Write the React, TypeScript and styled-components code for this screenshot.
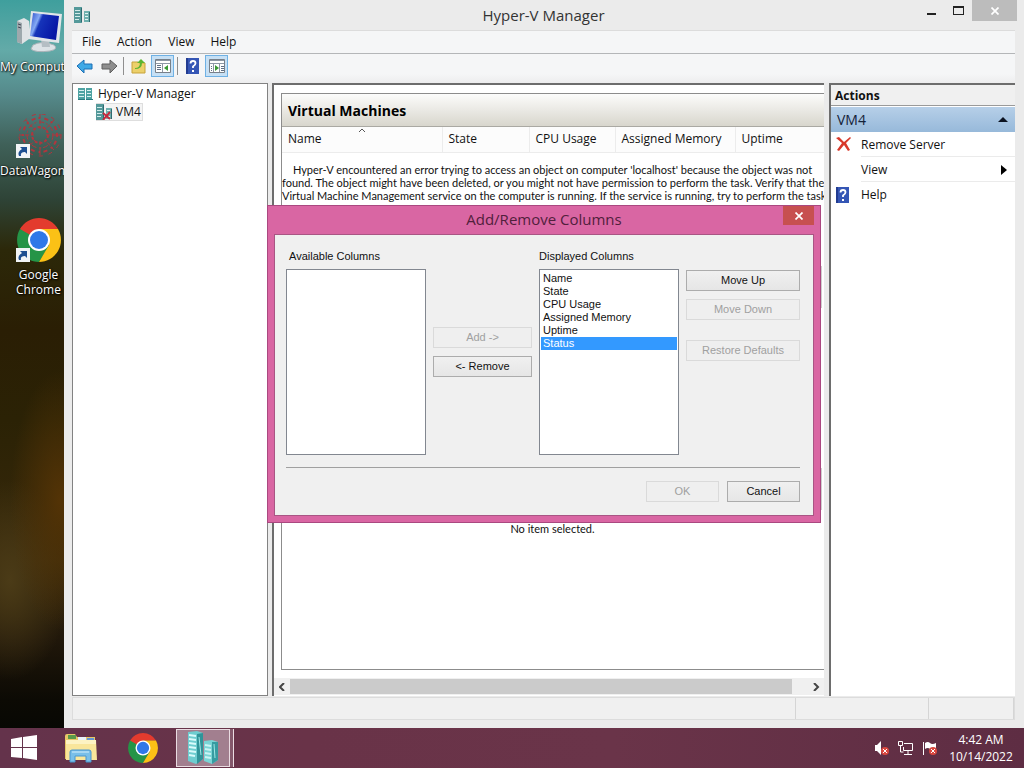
import React from "react";
import styled, { createGlobalStyle, css } from "styled-components";

const ui = `"Open Sans", "Noto Sans", sans-serif`;
const dialogFont = `"Liberation Sans", Arial, sans-serif`;
const messageFont = `Lato, "Liberation Sans", sans-serif`;

const Global = createGlobalStyle`
  * { box-sizing: border-box; }
  html, body { margin: 0; padding: 0; }
  body { font: 12px/16px ${ui}; color: #111; background: #000; overflow: hidden; }
  button, select, input { font: inherit; color: inherit; margin: 0; }
  svg { display: block; flex: none; }
  h1, h2, p, ul { margin: 0; padding: 0; font: inherit; }
  ul { list-style: none; }
`;

/* ---------- desktop ---------- */

const Desktop = styled.div`
  min-height: 100vh;
  display: flex;
  flex-direction: column;
`;

const Workspace = styled.div`
  flex: 1;
  display: flex;
  background:
    radial-gradient(ellipse 50px 130px at 60px 500px, #533306 0%, rgba(83, 51, 6, 0) 100%),
    radial-gradient(ellipse 60px 100px at 10px 580px, #4b3b17 0%, rgba(75, 59, 23, 0) 100%),
    linear-gradient(#3f9f9d 0, #63aaa8 50px, #55898a 95px, #3f6058 145px, #2e4336 200px, #2c2809 250px, #2a1e04 330px, #2b2205 420px, #38290b 560px, #20170a 640px, #0c0a04 700px, #080804 728px);
`;

const Shortcuts = styled.nav`
  width: 64px;
  flex: none;
  overflow: hidden;
  padding-top: 10px;
`;

const Shortcut = styled.a`
  width: 77px;
  height: 104px;
  display: flex;
  flex-direction: column;
  align-items: center;
  gap: 5px;
  color: #fff;
  text-decoration: none;
  text-align: center;
  line-height: 15px;
  text-shadow: 1px 1px 2px #000, 0 0 2px #000;
`;

const ShortcutLabel = styled.span<{ $start?: boolean }>`
  white-space: nowrap;
  ${(p) => p.$start && css`align-self: flex-start;`}
`;

/* ---------- application window ---------- */

const Window = styled.main`
  flex: 1;
  min-width: 0;
  position: relative;
  display: flex;
  flex-direction: column;
  padding: 0 9px 8px 8px;
  background: #ebebeb;
`;

const TitleBar = styled.header`
  height: 30px;
  display: grid;
  grid-template-columns: 1fr auto 1fr;
  align-items: center;
`;

const AppMark = styled.span`
  padding-left: 2px;
`;

const WindowTitle = styled.h1`
  font-size: 15px;
  line-height: 20px;
  color: #333;
`;

const Captions = styled.div`
  align-self: start;
  justify-self: end;
  display: flex;
  margin-right: -2px;
`;

const CaptionButton = styled.button<{ $wide?: boolean }>`
  width: ${(p) => (p.$wide ? 45 : 27)}px;
  height: 21px;
  padding: 0;
  border: 0;
  display: grid;
  place-items: center;
  background: ${(p) => (p.$wide ? "#bcbcbc" : "transparent")};
`;

const MenuBar = styled.nav`
  height: 24px;
  display: flex;
  align-items: center;
  background: #f5f6f7;
  border-top: 1px solid #dcdcdc;
  border-bottom: 1px solid #b4b6b8;
  padding-left: 2px;
`;

const MenuItem = styled.button`
  border: 0;
  background: none;
  padding: 0 8px;
  line-height: 20px;
`;

const ToolBar = styled.div`
  height: 29px;
  display: flex;
  align-items: center;
  gap: 1px;
  padding: 0 1px 5px;
  background: linear-gradient(#f5f6f7 0, #f5f6f7 20px, #ededee 29px);
`;

const ToolButton = styled.button<{ $on?: boolean }>`
  width: 23px;
  height: 22px;
  padding: 0;
  border: 1px solid ${(p) => (p.$on ? "#6fb1e4" : "transparent")};
  background: ${(p) => (p.$on ? "#c6e0f5" : "none")};
  display: grid;
  place-items: center;
`;

const ToolDivider = styled.span`
  width: 1px;
  height: 18px;
  margin: 0 2px;
  background: #8f8f8f;
`;

const Panes = styled.div`
  flex: 1;
  min-height: 0;
  display: grid;
  grid-template-columns: 196px minmax(0, 1fr) 186px;
  column-gap: 4px;
`;

const TreePane = styled.aside`
  background: #fff;
  border: 1px solid #828282;
  padding: 1px 5px;
`;

const TreeRow = styled.li<{ $depth?: number; $selected?: boolean }>`
  display: flex;
  align-items: center;
  gap: 4px;
  width: max-content;
  height: 18px;
  margin-left: ${(p) => (p.$depth || 0) * 18}px;
  padding-right: 2px;
  ${(p) => p.$selected && css`background: #f4f4f4; box-shadow: inset 0 0 0 1px #dedede;`}
`;

const CenterPane = styled.section`
  background: #fff;
  border: solid #6d6d6d;
  border-width: 2px 0 0 2px;
  margin-right: 1px;
  padding-bottom: 1px;
  overflow: hidden;
  display: flex;
  flex-direction: column;
`;

const Machines = styled.div`
  flex: 1;
  margin: 8px -4px 0 7px;
  border: 1px solid #8c8c8c;
`;

const MachinesTitle = styled.h2`
  height: 33px;
  padding: 0 6px;
  font-size: 14px;
  font-weight: 700;
  line-height: 33px;
  color: #000;
  background: linear-gradient(#fcfcfb, #d8d6cd);
  border-bottom: 1px solid #aaa9a3;
`;

const MachineTable = styled.table`
  width: 100%;
  table-layout: fixed;
  border-collapse: collapse;
`;

const ColumnHead = styled.th<{ $w?: number }>`
  position: relative;
  width: ${(p) => (p.$w ? p.$w + "px" : "auto")};
  height: 25px;
  padding: 0 0 0 6px;
  font-weight: 400;
  text-align: left;
  background: #fcfcfc;
  border-right: 1px solid #ececec;
  border-bottom: 1px solid #ececec;
`;

const SortMark = styled.svg`
  position: absolute;
  left: 48%;
  top: 1px;
`;

const Message = styled.p`
  padding: 10px 4px 0 0;
  font: 11px/13px ${messageFont};
  text-align: center;
  white-space: nowrap;
`;

const LowerSections = styled.div`
  height: 310px;
  padding: 64px 5px 0 0;
`;

const SectionFrame = styled.div<{ $gap?: number }>`
  height: 42px;
  margin-bottom: ${(p) => p.$gap || 0}px;
  border: 1px solid #cfcfcf;
`;

const ScrollBar = styled.div`
  height: 17px;
  margin-top: 8px;
  display: flex;
  align-items: center;
  background: #f0f0f0;
`;

const ScrollButton = styled.button`
  width: 16px;
  height: 17px;
  padding: 0;
  border: 0;
  background: none;
  display: grid;
  place-items: center;
`;

const ScrollTrack = styled.div`
  flex: 1;
`;

const ScrollThumb = styled.div`
  width: 97%;
  height: 15px;
  background: #cbcbcb;
`;

const ActionsPane = styled.aside`
  background: #fff;
  border: solid #6d6d6d;
  border-width: 2px 0 0 2px;
`;

const ActionsTitle = styled.h2`
  height: 21px;
  padding-left: 4px;
  font-weight: 700;
  line-height: 22px;
  background: #f0f0f0;
  border-bottom: 1px solid #9a9a9a;
`;

const ActionGroup = styled.button`
  width: 100%;
  height: 25px;
  margin-top: 1px;
  padding: 0 7px 0 6px;
  border: 0;
  display: flex;
  align-items: center;
  justify-content: space-between;
  background: linear-gradient(#b6cfe8, #97b9da);
  color: #152238;
  font-size: 14px;
`;

const Action = styled.button`
  width: 100%;
  height: 25px;
  padding: 0 8px 0 5px;
  border: 0;
  background: none;
  display: grid;
  grid-template-columns: 15px 1fr auto;
  column-gap: 10px;
  align-items: center;
  text-align: left;
`;

const ActionRow = styled.li`
  background: linear-gradient(#ebebeb, #ebebeb) right bottom / 154px 1px no-repeat;
  &:last-child { background: none; }
`;

const StatusBar = styled.footer`
  height: 23px;
  margin-top: 1px;
  display: grid;
  grid-template-columns: 1fr 133px 85px;
  border: 1px solid #dcdcdc;
  background: #f0f0f0;
`;

const StatusCell = styled.span`
  border-right: 1px solid #d5d5d5;
`;

/* ---------- dialog ---------- */

const DialogLayer = styled.div`
  position: absolute;
  inset: 0;
  display: grid;
  place-items: center;
`;

const Dialog = styled.div`
  padding: 0 6px 6px;
  border: 1px solid #aa4880;
  background: #d966a3;
  font: 11px/13px ${dialogFont};
`;

const DialogTitleBar = styled.div`
  height: 28px;
  display: grid;
  grid-template-columns: 31px 1fr 31px;
  text-align: center;
`;

const DialogTitle = styled.h2`
  font: 15px/26px ${ui};
  color: #51203c;
`;

const DialogClose = styled.button`
  height: 19px;
  padding: 0;
  border: 0;
  display: grid;
  place-items: center;
  background: #c75050;
`;

const DialogBody = styled.form`
  padding: 15px 13px 13px 11px;
  border: 1px solid #a95584;
  background: #f0f0f0;
`;

const Picker = styled.div`
  display: grid;
  grid-template-columns: 140px 99px 140px 114px;
  column-gap: 7px;
`;

const Field = styled.div`
  display: flex;
  flex-direction: column;
  gap: 6px;
`;

const FieldLabel = styled.label<{ $inset?: boolean }>`
  padding-left: ${(p) => (p.$inset ? 3 : 0)}px;
`;

const ListBox = styled.select`
  height: 186px;
  padding: 2px 1px;
  border: 1px solid #828790;
  border-radius: 0;
  outline: 0;
  background: #fff;
  overflow: hidden;
`;

const ListItem = styled.option`
  height: 13px;
  min-height: 13px;
  padding: 0 2px;
  line-height: 13px;
  &:checked {
    background: linear-gradient(#3399ff, #3399ff);
    -webkit-text-fill-color: #fff;
  }
`;

const ButtonStack = styled.div<{ $top: number }>`
  display: flex;
  flex-direction: column;
  gap: 8px;
  padding-top: ${(p) => p.$top}px;
`;

const PushButton = styled.button<{ $apart?: boolean }>`
  height: 21px;
  min-width: 73px;
  margin-top: ${(p) => (p.$apart ? 12 : 0)}px;
  padding: 0;
  border: 1px solid #acacac;
  background: linear-gradient(#f0f0f0, #e6e6e6);
  &:disabled {
    color: #a0a0a0;
    border-color: #dadada;
    background: #efefef;
  }
`;

const Rule = styled.hr`
  height: 1px;
  margin: 12px 0 13px;
  border: 0;
  background: #a0a0a0;
`;

const DialogFooter = styled.div`
  display: flex;
  justify-content: flex-end;
  gap: 8px;
`;

/* ---------- task bar ---------- */

const TaskBar = styled.footer`
  height: 40px;
  display: flex;
  align-items: center;
  background: linear-gradient(90deg, #64334b, #693348 30%, #6a3449 60%, #5e2d43);
  color: #fff;
`;

const TaskButton = styled.button<{ $w: number; $active?: boolean }>`
  width: ${(p) => p.$w}px;
  height: 38px;
  padding: 0;
  border: 0;
  background: none;
  display: grid;
  place-items: center;
  ${(p) =>
    p.$active &&
    css`
      margin-left: 5px;
      border: 1px solid #eadce2;
      background: #a27f8f;
      box-shadow: 3px 0 0 #84586b, 4px 0 0 #eadce2;
    `}
`;

const Tray = styled.div`
  margin-left: auto;
  padding-right: 8px;
  display: flex;
  align-items: center;
  gap: 8px;
`;

const Clock = styled.time`
  width: 70px;
  line-height: 17px;
  text-align: center;
`;

/* ---------- drawings ---------- */

const ComputerIcon = () => (
  <svg width="46" height="44" viewBox="0 0 46 44">
    <defs>
      <linearGradient id="scr" x1="0" x2="1" y2="0.4">
        <stop offset="0" stopColor="#2749c9" /><stop offset=".32" stopColor="#86aaf4" />
        <stop offset=".42" stopColor="#1634ba" /><stop offset="1" stopColor="#0716a5" />
      </linearGradient>
    </defs>
    <path d="M1 11l7-3 5 3v18l-7 5-5-2z" fill="#dfe3e5" />
    <path d="M1 11l5 2v21l-5-2z" fill="#9ea9ad" /><path d="M2 14l3 1M2 17l3 1" stroke="#445" />
    <path d="M17 35q9-5 21 0 5 4-4 6-15 2-19-2z" fill="#dce2e6" stroke="#aab3b8" />
    <path d="M25 29h8l1 8h-8z" fill="#b5bec4" />
    <path d="M15 1l31 3-3 29-31-4z" fill="#e1e5e8" />
    <path d="M17 3l26 3-3 24-26-4z" fill="url(#scr)" />
  </svg>
);

const ShortcutArrow = ({ y }: { y: number }) => (
  <g transform={`translate(0 ${y})`}>
    <path d="M0 0h14v14H0z" fill="#f1f4f6" />
    <path d="M3 12q-2-4 3-7L4 3h7v7L9 8q-5 0-4 4z" fill="#1d4f91" />
  </g>
);

const WagonIcon = () => (
  <svg width="46" height="44" viewBox="0 0 46 44">
    <g fill="none" stroke="#b2353d" transform="translate(24 21)">
      <circle r="8" strokeWidth="2" strokeDasharray="3 2" />
      <circle r="13" strokeDasharray="5 2 2 3" />
      <circle r="17" strokeWidth="2" strokeDasharray="2 4 4 3" />
      <circle r="21" strokeDasharray="4 6" />
      <path d="M0-21V-6M0 6v14M-21 0H-6M6 0h15M-14-15l9 10M14-15L5-5M-14 15l9-10M14 15L5 5" strokeDasharray="4 2" />
    </g>
    <ShortcutArrow y={30} />
  </svg>
);

const ChromeIcon = ({ size = 44, linked = false }) => (
  <svg width={linked ? size + 2 : size} height={size} viewBox={linked ? "-1 0 46 44" : "0 0 44 44"}>
    <path d="M3 11l10 16 9-16h19A22 22 0 003 11z" fill="#e33b2e" />
    <path d="M22 22L3 11A22 22 0 0022 44l10-16z" fill="#259447" />
    <path d="M22 11h19a22 22 0 01-19 33l10-17z" fill="#fbc116" />
    <circle cx="22" cy="22" r="11" fill="#fff" /><circle cx="22" cy="22" r="9" fill="#2f78e8" />
    {linked && <g transform="translate(-1 0)"><ShortcutArrow y={30} /></g>}
  </svg>
);

const ServerIcon = ({ broken = false, even = false }) => (
  <svg width="16" height="16" viewBox="0 0 16 16">
    {even ? (
      <>
        <path d="M0 2h7v12H0zM8 2h6v12H8z" fill="#4fa3a3" />
        <path d="M1 4.500h5M1 7.500h5M1 10.500h5M9 4.500h4M9 7.500h4M9 10.500h4" stroke="#d9f2f0" />
        <path d="M0 13.500h7M8 13.500h7" stroke="#2b7c80" />
      </>
    ) : (
      <>
        <path d="M0 0h8v16H0z" fill="#54999a" /><path d="M10 4h6v11h-6z" fill="#6fb0ae" />
        <path d="M1 3.500h5M1 6.500h5M1 9.500h5M1 12.500h4" stroke="#d2ecea" />
        <path d="M11 6.500h3M11 9.500h3M11 12.500h3" stroke="#e0f3f1" />
        <path d="M7.500 1v14M15.500 5v10" stroke="#2f6b70" />
      </>
    )}
    {broken && <path d="M7 9l7 6M14 8l-7 8" stroke="#c5293d" strokeWidth="2" />}
  </svg>
);

const Arrow = ({ back = false }) => (
  <svg width="18" height="16" viewBox="0 0 18 16">
    <path
      d={back ? "M1 8l7-6v4h8v5H8v4z" : "M17 8l-7-6v4H2v5h8v4z"}
      fill={back ? "#3fa9e6" : "#8e8e8e"} stroke={back ? "#1c6fb5" : "#5f5f5f"}
    />
  </svg>
);

const FolderUpIcon = () => (
  <svg width="16" height="16" viewBox="0 0 16 16">
    <path d="M1 4h6l1 1h6v10H1z" fill="#ecd06a" stroke="#c7a23b" />
    <path d="M4 10q5 0 5-5H6l4-4 4 4h-3q0 6-7 6z" fill="#5bb531" />
  </svg>
);

const PaneIcon = ({ right = false }) => (
  <svg width="16" height="14" viewBox="0 0 16 14">
    <path d="M.5.5h15v13H.5z" fill="#fff" stroke="#788089" />
    <path d="M1 1.500h14M1 4.500h14" stroke="#8d98a5" />
    <path d={right ? "M10.500 5v8M4.500 5v8" : "M7.500 5v8"} stroke="#8d98a5" />
    <path d={right ? "M12 7.500h3M12 9.500h3M12 11.500h3M2 7.500h1M2 9.500h1M2 11.500h1" : "M2 6.500h4M2 8.500h4M2 10.500h4"} stroke="#5f6f85" />
    <path d={right ? "M6 6l4 3-4 3z" : "M13 6L9 9l4 3z"} fill="#3a9a34" />
  </svg>
);

const HelpIcon = () => (
  <svg width="13" height="16" viewBox="0 0 13 16">
    <path d="M0 0h13v16H0z" fill="#3556b5" /><path d="M0 0h2v16H0z" fill="#223c91" />
    <path d="M4.500 5.500q0-2.500 2.500-2.500t2.500 2.300Q9.500 7 7 8.500V10" fill="none" stroke="#fff" strokeWidth="1.800" />
    <path d="M6 12h2v2H6z" fill="#fff" />
  </svg>
);

const RemoveIcon = () => (
  <svg width="15" height="15" viewBox="0 0 15 15">
    <path d="M0 1l3-1 5 5 6-5 1 1-5 5 4 7-2 1-4-6-5 6-2-1 5-7z" fill="#d8392b" />
  </svg>
);

const Cross = ({ size = 8 }) => (
  <svg width={size} height={size} viewBox="0 0 8 8">
    <path d="M.5.5l7 7M7.500.5l-7 7" stroke="#fff" strokeWidth="1.700" />
  </svg>
);

const Chevron = ({ right = false }) => (
  <svg width="7" height="8" viewBox="0 0 7 8">
    <path d={right ? "M1 0l4 4-4 4" : "M5 0L1 4l4 4"} fill="none" stroke="#444" strokeWidth="2" />
  </svg>
);

const WindowsLogo = () => (
  <svg width="26" height="26" viewBox="0 0 26 26" fill="#fff">
    <path d="M0 4l11-2v10H0zM12 2l14-2v12H12zM0 13h11v10L0 22zM12 13h14v12l-14-2z" />
  </svg>
);

const ExplorerIcon = () => (
  <svg width="32" height="30" viewBox="0 0 32 30">
    <path d="M0 3q0-2 2-2h8l2 3h18v22H0z" fill="#e7c867" />
    <path d="M3 2h8v4H3z" fill="#5a9a4a" /><path d="M13 4h8v4h-8z" fill="#e8f2fa" /><path d="M22 5h7v3h-7z" fill="#6398d4" />
    <path d="M1 7h30l1 20H1z" fill="#f9e69b" /><path d="M1 7h30v4H1z" fill="#fdf3c3" />
    <path d="M5 29V19q0-2 2-2h17q2 0 2 2v10h-5v-6H10v6z" fill="#79bfe9" stroke="#4a96cd" />
    <path d="M7 19h17" stroke="#d5effc" />
  </svg>
);

const ServersIcon = () => (
  <svg width="32" height="34" viewBox="0 0 32 34">
    <path d="M1 1l9-1 6 2v26l-7 5-8-3z" fill="#6ecdd0" /><path d="M10 3l6-1v26l-6 5z" fill="#2f9499" />
    <path d="M2 4l7 1M2 8l7 1M2 12l7 1M2 16l7 1M2 20l7 1M2 24l6 1" stroke="#d9fbfb" strokeWidth="2" />
    <path d="M17 10l8-1 6 2v18l-6 4-8-3z" fill="#7ad5d6" /><path d="M25 11l6 0v18l-6 4z" fill="#369ca1" />
    <path d="M18 14l6 1M18 18l6 1M18 22l6 1M18 26l6 1" stroke="#cbf4f4" strokeWidth="2" />
    <path d="M12 6l2 18M27 13l1 14" stroke="#9ee7e7" />
  </svg>
);

const TrayBadge = () => (
  <g><circle cx="11" cy="11" r="4" fill="#d9473f" /><path d="M9 9l4 4M13 9l-4 4" stroke="#fff" /></g>
);

const SpeakerIcon = () => (
  <svg width="16" height="16" viewBox="0 0 16 16"><path d="M1 5h2l4-4v14l-4-4H1z" fill="#fff" /><TrayBadge /></svg>
);
const NetworkIcon = () => (
  <svg width="16" height="16" viewBox="0 0 16 16" fill="none" stroke="#fff">
    <path d="M6 3.500h8.500v7h-9V7M10 11v3M6 14.500h8M2.500 6v6h3M.5 1.500h4v4h-4z" />
  </svg>
);
const FlagIcon = () => (
  <svg width="16" height="16" viewBox="0 0 16 16"><path d="M1.500 2v13" stroke="#fff" /><path d="M3 3q3-2 5 0t6 0v7q-4 1-6-1t-5 0z" fill="#fff" /><TrayBadge /></svg>
);

/* ---------- page ---------- */

const columns = ["Name", "State", "CPU Usage", "Assigned Memory", "Uptime", "Status"];
const heads: [string, number?][] = [["Name", 160], ["State", 87], ["CPU Usage", 86], ["Assigned Memory", 120], ["Uptime"]];

export default function App() {
  return (
    <Desktop>
      <Global />
      <Workspace>
        <Shortcuts>
          <Shortcut href="#computer"><ComputerIcon /><ShortcutLabel $start>My Computer</ShortcutLabel></Shortcut>
          <Shortcut href="#datawagon"><WagonIcon /><ShortcutLabel $start>DataWagon</ShortcutLabel></Shortcut>
          <Shortcut href="#chrome"><ChromeIcon linked /><ShortcutLabel>Google<br />Chrome</ShortcutLabel></Shortcut>
        </Shortcuts>
        <Window>
          <TitleBar>
            <AppMark><ServerIcon /></AppMark>
            <WindowTitle>Hyper-V Manager</WindowTitle>
            <Captions>
              <CaptionButton aria-label="Minimize">
                <svg width="9" height="9"><path d="M0 7h9v2H0z" fill="#222" /></svg>
              </CaptionButton>
              <CaptionButton aria-label="Maximize">
                <svg width="11" height="9"><path d="M0 0h11v9H0zM1 2v6h9V2z" fill="#222" fillRule="evenodd" /></svg>
              </CaptionButton>
              <CaptionButton aria-label="Close" $wide><Cross /></CaptionButton>
            </Captions>
          </TitleBar>
          <MenuBar>
            {["File", "Action", "View", "Help"].map((m) => <MenuItem key={m}>{m}</MenuItem>)}
          </MenuBar>
          <ToolBar>
            <ToolButton aria-label="Back"><Arrow back /></ToolButton>
            <ToolButton aria-label="Forward"><Arrow /></ToolButton>
            <ToolDivider />
            <ToolButton aria-label="Up one level"><FolderUpIcon /></ToolButton>
            <ToolButton aria-label="Show console tree" $on><PaneIcon /></ToolButton>
            <ToolDivider />
            <ToolButton aria-label="Help"><HelpIcon /></ToolButton>
            <ToolButton aria-label="Show action pane" $on><PaneIcon right /></ToolButton>
          </ToolBar>
          <Panes>
            <TreePane>
              <ul>
                <TreeRow><ServerIcon even />Hyper-V Manager</TreeRow>
                <TreeRow $depth={1} $selected><ServerIcon broken />VM4</TreeRow>
              </ul>
            </TreePane>
            <CenterPane>
              <Machines>
                <MachinesTitle>Virtual Machines</MachinesTitle>
                <MachineTable>
                  <thead>
                    <tr>
                      {heads.map(([name, w]) => (
                        <ColumnHead key={name} $w={w}>
                          {name}
                          {name === "Name" && (
                            <SortMark width="6" height="4" viewBox="0 0 6 4"><path d="M0 4l3-3 3 3" fill="none" stroke="#555" /></SortMark>
                          )}
                        </ColumnHead>
                      ))}
                    </tr>
                  </thead>
                </MachineTable>
                <Message>
                  Hyper-V encountered an error trying to access an object on computer 'localhost' because the object was not<br />
                  found. The object might have been deleted, or you might not have permission to perform the task. Verify that the<br />
                  Virtual Machine Management service on the computer is running. If the service is running, try to perform the task
                </Message>
                <LowerSections>
                  <SectionFrame $gap={160} />
                  <SectionFrame />
                </LowerSections>
                <Message>No item selected.</Message>
              </Machines>
              <ScrollBar>
                <ScrollButton aria-label="Scroll left"><Chevron /></ScrollButton>
                <ScrollTrack><ScrollThumb /></ScrollTrack>
                <ScrollButton aria-label="Scroll right"><Chevron right /></ScrollButton>
              </ScrollBar>
            </CenterPane>
            <ActionsPane>
              <ActionsTitle>Actions</ActionsTitle>
              <ActionGroup>
                VM4
                <svg width="10" height="5"><path d="M0 5l5-5 5 5z" fill="#0b1220" /></svg>
              </ActionGroup>
              <ul>
                <ActionRow><Action><RemoveIcon />Remove Server</Action></ActionRow>
                <ActionRow>
                  <Action>
                    <span />View
                    <svg width="6" height="10"><path d="M0 0l6 5-6 5z" fill="#000" /></svg>
                  </Action>
                </ActionRow>
                <ActionRow><Action><HelpIcon />Help</Action></ActionRow>
              </ul>
            </ActionsPane>
          </Panes>
          <StatusBar><StatusCell /><StatusCell /><StatusCell /></StatusBar>

          <DialogLayer>
            <Dialog role="dialog" aria-labelledby="dialog-title">
              <DialogTitleBar>
                <span />
                <DialogTitle id="dialog-title">Add/Remove Columns</DialogTitle>
                <DialogClose aria-label="Close"><Cross /></DialogClose>
              </DialogTitleBar>
              <DialogBody onSubmit={(e) => e.preventDefault()}>
                <Picker>
                  <Field>
                    <FieldLabel $inset htmlFor="available">Available Columns</FieldLabel>
                    <ListBox id="available" size={14} />
                  </Field>
                  <ButtonStack $top={77}>
                    <PushButton type="button" disabled>Add -&gt;</PushButton>
                    <PushButton type="button">&lt;- Remove</PushButton>
                  </ButtonStack>
                  <Field>
                    <FieldLabel htmlFor="displayed">Displayed Columns</FieldLabel>
                    <ListBox id="displayed" size={14} defaultValue="Status">
                      {columns.map((c) => <ListItem key={c}>{c}</ListItem>)}
                    </ListBox>
                  </Field>
                  <ButtonStack $top={20}>
                    <PushButton type="button">Move Up</PushButton>
                    <PushButton type="button" disabled>Move Down</PushButton>
                    <PushButton type="button" disabled $apart>Restore Defaults</PushButton>
                  </ButtonStack>
                </Picker>
                <Rule />
                <DialogFooter>
                  <PushButton disabled>OK</PushButton>
                  <PushButton type="button">Cancel</PushButton>
                </DialogFooter>
              </DialogBody>
            </Dialog>
          </DialogLayer>
        </Window>
      </Workspace>
      <TaskBar>
        <TaskButton $w={47} aria-label="Start"><WindowsLogo /></TaskButton>
        <TaskButton $w={68} aria-label="File Explorer"><ExplorerIcon /></TaskButton>
        <TaskButton $w={56} aria-label="Google Chrome"><ChromeIcon size={30} /></TaskButton>
        <TaskButton $w={54} $active aria-label="Hyper-V Manager"><ServersIcon /></TaskButton>
        <Tray>
          <SpeakerIcon /><NetworkIcon /><FlagIcon />
          <Clock>4:42 AM<br />10/14/2022</Clock>
        </Tray>
      </TaskBar>
    </Desktop>
  );
}
